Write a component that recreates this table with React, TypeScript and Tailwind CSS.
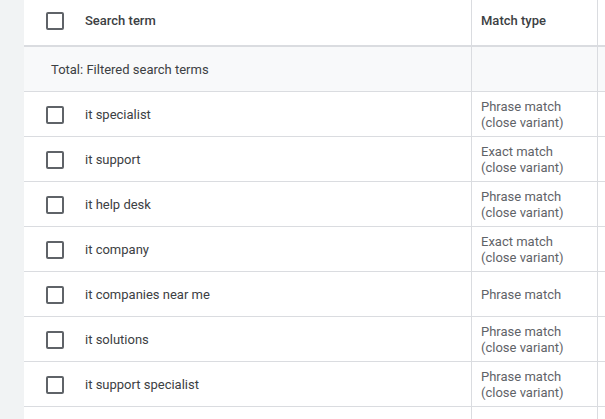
import React from 'react';

type Row = { term: string; match: string; variant: boolean };

const rows: Row[] = [
  { term: 'it specialist', match: 'Phrase match', variant: true },
  { term: 'it support', match: 'Exact match', variant: true },
  { term: 'it help desk', match: 'Phrase match', variant: true },
  { term: 'it company', match: 'Exact match', variant: true },
  { term: 'it companies near me', match: 'Phrase match', variant: false },
  { term: 'it solutions', match: 'Phrase match', variant: true },
  { term: 'it support specialist', match: 'Phrase match', variant: true },
  { term: '', match: '', variant: false },
];

const Checkbox: React.FC = () => (
  <div className="w-[18px] h-[18px] rounded-[2px] border-2 border-[#5f6368] bg-white shrink-0" />
);

const App: React.FC = () => {
  return (
    <div className="flex h-[419px] w-[605px] overflow-hidden bg-white font-['Roboto',sans-serif] text-[13px] text-[#3c4043]">
      <div className="w-[24px] shrink-0 bg-[#f1f3f4]" />
      <div className="flex-1 flex flex-col min-w-0">
        {/* header */}
        <div className="flex h-[47px] shrink-0 border-b-2 border-[#dadce0]">
          <div className="w-[448px] shrink-0 flex items-center pl-[22px] pb-[4px] gap-[21px] border-r border-[#dadce0]">
            <Checkbox />
            <span className="font-medium">Search term</span>
          </div>
          <div className="w-[126px] shrink-0 flex items-center pl-[9px] pb-[4px] font-medium border-r border-[#dadce0]">
            Match type
          </div>
          <div className="flex-1" />
        </div>

        {/* total */}
        <div className="flex h-[45px] shrink-0 bg-[#f8f9fa] border-b border-[#dadce0]">
          <div className="w-[448px] shrink-0 flex items-center pl-[27px] pt-[2px] border-r border-[#dadce0]">
            Total: Filtered search terms
          </div>
          <div className="w-[126px] shrink-0 border-r border-[#dadce0]" />
          <div className="flex-1" />
        </div>

        {rows.map((r, i) => (
          <div key={i} className="flex h-[45px] shrink-0 border-b border-[#dadce0]">
            <div className="w-[448px] shrink-0 flex items-center pl-[22px] pt-[2px] gap-[21px] border-r border-[#dadce0]">
              {r.term && <Checkbox />}
              <span>{r.term}</span>
            </div>
            <div className="w-[126px] shrink-0 flex flex-col justify-center pl-[9px] pt-[2px] leading-[16px] text-[#5f6368] border-r border-[#dadce0]">
              <span>{r.match}</span>
              {r.variant && <span>(close variant)</span>}
            </div>
            <div className="flex-1" />
          </div>
        ))}
      </div>
    </div>
  );
};

export default App;
